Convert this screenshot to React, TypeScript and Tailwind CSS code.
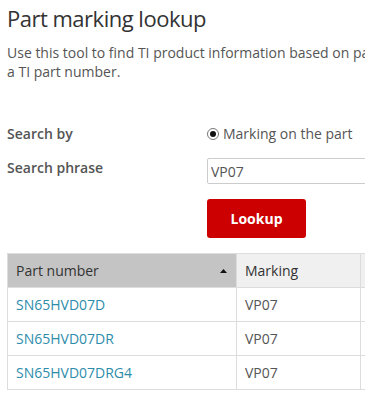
import { useState } from "react";

const rows = [
  { part: "SN65HVD07D", marking: "VP07" },
  { part: "SN65HVD07DR", marking: "VP07" },
  { part: "SN65HVD07DRG4", marking: "VP07" },
];

function SortArrow() {
  return (
    <svg width="7" height="4" viewBox="0 0 7 4" className="shrink-0">
      <path d="M3.5 0 L7 4 L0 4 Z" fill="#111" />
    </svg>
  );
}

export default function App() {
  const [phrase, setPhrase] = useState("VP07");

  return (
    <div className="h-[398px] w-[365px] overflow-hidden bg-white pl-[7px] pt-[2px] font-['Open_Sans',sans-serif] text-[#555]">
      <h1 className="text-[22px] leading-8 font-medium tracking-[-0.5px] text-[#333]">
        Part marking lookup
      </h1>
      <p className="mt-[9px] w-[420px] text-[14px] leading-[19px]">
        <span className="whitespace-nowrap">
          Use this tool to find TI product information based on part marking or
        </span>
        <br />a TI part number.
      </p>

      <div className="mt-[43px] grid grid-cols-[200px_1fr] text-[14px] leading-5">
        <div className="font-semibold">Search by</div>
        <label className="flex items-center gap-[4px] whitespace-nowrap">
          <span className="flex h-[12px] w-[12px] items-center justify-center rounded-full border border-[#777] bg-white">
            <span className="h-[6px] w-[6px] rounded-full bg-[#111]" />
          </span>
          Marking on the part
        </label>

        <div className="mt-[14px] font-semibold">Search phrase</div>
        <div className="mt-[14px]">
          <input
            value={phrase}
            onChange={(e) => setPhrase(e.target.value)}
            className="h-[26px] w-[200px] rounded-[2px] border border-[#ccc] px-[3px] text-[14px] text-[#555] outline-none"
          />
          <button
            type="button"
            className="mt-[15px] block h-[39px] w-[99px] rounded-[3px] bg-[#cc0000] text-[14px] font-bold text-white"
          >
            Lookup
          </button>
        </div>
      </div>

      <table className="mt-[15px] w-[440px] table-fixed border-collapse text-[14px] leading-5">
        <colgroup>
          <col className="w-[229px]" />
          <col className="w-[124px]" />
          <col />
        </colgroup>
        <thead>
          <tr className="h-[34px]">
            <th className="border border-[#ddd] bg-[#c4c4c4] px-2 text-left font-normal text-[#333]">
              <div className="flex items-center justify-between pr-[1px]">
                Part number
                <SortArrow />
              </div>
            </th>
            <th className="border border-[#ddd] bg-[#f0f0f0] px-2 text-left font-normal text-[#333]">
              Marking
            </th>
            <th className="border border-[#ddd] bg-[#f0f0f0]" />
          </tr>
        </thead>
        <tbody>
          {rows.map((r) => (
            <tr key={r.part} className="h-[34px]">
              <td className="border border-[#ddd] px-2">
                <a href="#" className="text-[#2e8cab]">
                  {r.part}
                </a>
              </td>
              <td className="border border-[#ddd] px-2">{r.marking}</td>
              <td className="border border-[#ddd]" />
            </tr>
          ))}
        </tbody>
      </table>
    </div>
  );
}
